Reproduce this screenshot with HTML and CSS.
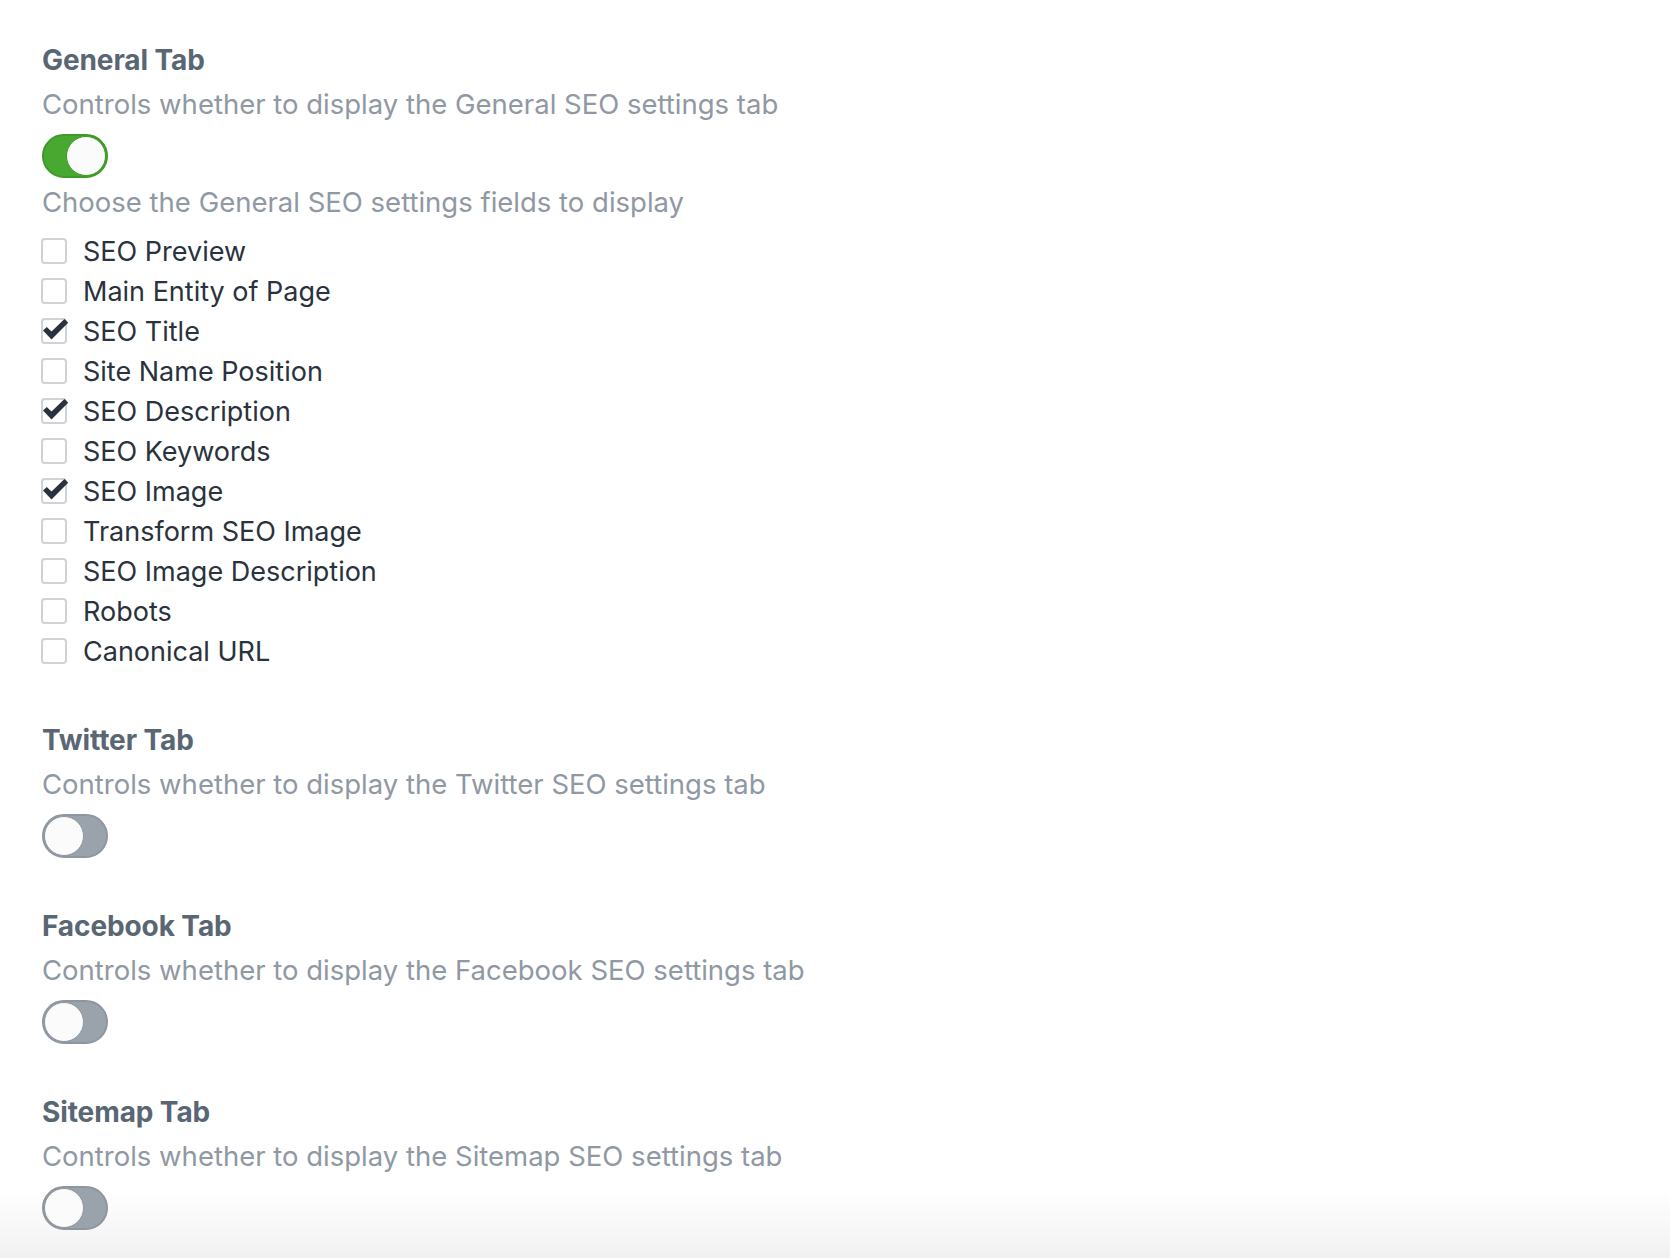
FILE: index.html
```html
<!DOCTYPE html>
<html lang="en">
<head>
<meta charset="utf-8">
<title>SEO Settings Tabs</title>
<link rel="stylesheet" href="styles.css">
</head>
<body>
<main class="page">
  <section class="field">
    <h2 class="field-heading">General Tab</h2>
    <p class="field-desc">Controls whether to display the General SEO settings tab</p>
    <div class="switch on"><span class="knob"></span></div>
    <p class="field-desc sub">Choose the General SEO settings fields to display</p>
    <ul class="checks">
      <li class="check-row"><span class="box"></span><span class="lbl">SEO Preview</span></li>
      <li class="check-row"><span class="box"></span><span class="lbl">Main Entity of Page</span></li>
      <li class="check-row"><span class="box checked"><svg class="tick" viewBox="0 0 26 26"><path d="M2 12.5 L5.8 9 L10.5 13.6 L23.5 1 L27.2 4.8 L10.5 21.6 Z"/></svg></span><span class="lbl">SEO Title</span></li>
      <li class="check-row"><span class="box"></span><span class="lbl">Site Name Position</span></li>
      <li class="check-row"><span class="box checked"><svg class="tick" viewBox="0 0 26 26"><path d="M2 12.5 L5.8 9 L10.5 13.6 L23.5 1 L27.2 4.8 L10.5 21.6 Z"/></svg></span><span class="lbl">SEO Description</span></li>
      <li class="check-row"><span class="box"></span><span class="lbl">SEO Keywords</span></li>
      <li class="check-row"><span class="box checked"><svg class="tick" viewBox="0 0 26 26"><path d="M2 12.5 L5.8 9 L10.5 13.6 L23.5 1 L27.2 4.8 L10.5 21.6 Z"/></svg></span><span class="lbl">SEO Image</span></li>
      <li class="check-row"><span class="box"></span><span class="lbl">Transform SEO Image</span></li>
      <li class="check-row"><span class="box"></span><span class="lbl">SEO Image Description</span></li>
      <li class="check-row"><span class="box"></span><span class="lbl">Robots</span></li>
      <li class="check-row"><span class="box"></span><span class="lbl">Canonical URL</span></li>
    </ul>
  </section>
  <section class="field">
    <h2 class="field-heading">Twitter Tab</h2>
    <p class="field-desc">Controls whether to display the Twitter SEO settings tab</p>
    <div class="switch"><span class="knob"></span></div>
  </section>
  <section class="field">
    <h2 class="field-heading">Facebook Tab</h2>
    <p class="field-desc">Controls whether to display the Facebook SEO settings tab</p>
    <div class="switch"><span class="knob"></span></div>
  </section>
  <section class="field">
    <h2 class="field-heading">Sitemap Tab</h2>
    <p class="field-desc">Controls whether to display the Sitemap SEO settings tab</p>
    <div class="switch"><span class="knob"></span></div>
  </section>
</main>
</body>
</html>
```
FILE: styles.css
```css
html, body {
  margin: 0;
  padding: 0;
}
body {
  min-height: 100vh;
  background: linear-gradient(to bottom, #ffffff 0, #ffffff calc(100% - 68px), #f1f1f1 100%);
  font-family: Inter, "Liberation Sans", sans-serif;
  -webkit-font-smoothing: antialiased;
}
.page {
  display: flex;
  flex-direction: column;
  gap: 48px;
  padding: 40px 0 0 42px;
}
.field {
  display: flex;
  flex-direction: column;
  align-items: flex-start;
}
.field-heading {
  margin: 0;
  font-size: 28px;
  line-height: 40px;
  font-weight: 700;
  color: #596673;
  letter-spacing: -0.1px;
}
.field-desc {
  margin: 4px 0 0;
  font-size: 27.5px;
  line-height: 40px;
  color: #8f98a3;
}
.field-desc.sub {
  margin-top: 4px;
}
.switch {
  margin-top: 10px;
  box-sizing: border-box;
  width: 66px;
  height: 44px;
  border-radius: 22px;
  border: 2px solid #8e969f;
  background: #9aa2ab;
  display: flex;
  align-items: center;
  justify-content: flex-start;
}
.switch.on {
  background: #49a830;
  border-color: #3d9a26;
  justify-content: flex-end;
}
.knob {
  box-sizing: border-box;
  width: 40px;
  height: 40px;
  border-radius: 50%;
  background: #fbfbfb;
  border: 1.5px solid #8e969f;
}
.switch.on .knob {
  border-color: #3d9a26;
}
.checks {
  list-style: none;
  margin: 10px 0 0;
  padding: 0;
  display: flex;
  flex-direction: column;
}
.check-row {
  height: 40px;
  display: flex;
  align-items: center;
  gap: 16px;
}
.box {
  position: relative;
  box-sizing: border-box;
  width: 26px;
  height: 26px;
  margin-left: -1px;
  margin-top: -2px;
  border: 2px solid #cfd2d6;
  border-radius: 4px;
  background: #fff;
}
.tick {
  position: absolute;
  left: -2px;
  top: -2px;
  width: 26px;
  height: 26px;
  overflow: visible;
  fill: #29323d;
}
.lbl {
  font-size: 27px;
  line-height: 40px;
  color: #29323d;
}
```
